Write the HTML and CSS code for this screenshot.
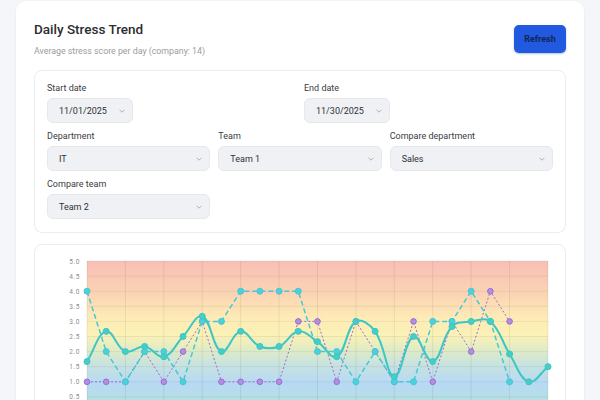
FILE: index.html
```html
<!DOCTYPE html>
<html lang="en">
  <head>
    <meta charset="UTF-8" />
    <meta name="viewport" content="width=device-width, initial-scale=1.0" />
    <title>Daily Stress Trend</title>
    <link rel="stylesheet" href="styles.css">
  </head>
  <body>
    <div class="card">
      <div class="cardHeader">
        <div>
          <h2 class="title">Daily Stress Trend</h2>
          <p class="subtitle">Average stress score per day (company: 14)</p>
        </div>
        <button class="refreshBtn">Refresh</button>
      </div>

      <div class="filters">
        <div class="row two">
          <div class="field">
            <label>Start date</label>
            <div class="select small"><span>11/01/2025</span><svg class="chev" viewBox="0 0 10 6"><path d="M1 1l4 4 4-4" /></svg></div>
          </div>
          <div class="field">
            <label>End date</label>
            <div class="select small"><span>11/30/2025</span><svg class="chev" viewBox="0 0 10 6"><path d="M1 1l4 4 4-4" /></svg></div>
          </div>
        </div>
        <div class="row three">
          <div class="field">
            <label>Department</label>
            <div class="select"><span>IT</span><svg class="chev" viewBox="0 0 10 6"><path d="M1 1l4 4 4-4" /></svg></div>
          </div>
          <div class="field">
            <label>Team</label>
            <div class="select"><span>Team 1</span><svg class="chev" viewBox="0 0 10 6"><path d="M1 1l4 4 4-4" /></svg></div>
          </div>
          <div class="field">
            <label>Compare department</label>
            <div class="select"><span>Sales</span><svg class="chev" viewBox="0 0 10 6"><path d="M1 1l4 4 4-4" /></svg></div>
          </div>
        </div>
        <div class="row three">
          <div class="field">
            <label>Compare team</label>
            <div class="select"><span>Team 2</span><svg class="chev" viewBox="0 0 10 6"><path d="M1 1l4 4 4-4" /></svg></div>
          </div>
        </div>
      </div>

      <div class="chartBox">
        <svg id="chart" width="530" height="200" viewBox="0 0 530 200">
          <defs>
            <linearGradient id="bands" x1="0" y1="0" x2="0" y2="1">
              <stop offset="0" stop-color="#f8bfb6" />
              <stop offset="0.2" stop-color="#fbd3b4" />
              <stop offset="0.36" stop-color="#fdecb6" />
              <stop offset="0.46" stop-color="#fbf1b6" />
              <stop offset="0.54" stop-color="#e3ecc3" />
              <stop offset="0.64" stop-color="#c8e3de" />
              <stop offset="0.76" stop-color="#b7d9f4" />
              <stop offset="0.9" stop-color="#b5e2de" />
              <stop offset="1" stop-color="#b8e8d2" />
            </linearGradient>
          </defs>
        </svg>
      </div>
    </div>

    <script>
      (function () {
        // chart geometry
        const plotLeft = 52, plotRight = 513, plotTop = 16, unit = 30.2;
        const count = 25;
        const step = (plotRight - plotLeft) / (count - 1);
        const NS = 'http://www.w3.org/2000/svg';
        const svg = document.getElementById('chart');

        const team = [1.67, 2.67, 2.0, 2.17, 1.83, 2.5, 3.17, 2.0, 2.67, 2.17, 2.17, 2.67, 2.33, 1.83, 3.0, 2.67, 1.17, 2.5, 1.67, 2.83, 3.0, 3.0, 1.92, 1.0, 1.5];
        const compareDept = [4, 2, 1, 2, 2, 1, 3, 3, 4, 4, 4, 4, 2, 2, 1, 2, 1, 1, 3, 3, 4, 3, 1];
        const compareTeam = [1, 1, 1, 2, 1, 2, 3, 1, 1, 1, 1, 3, 3, 1, 3, 2, 1, 3, 1, 3, 2, 4, 3];

        function yOf(v) {
          return plotTop + (5 - v) * unit;
        }

        function el(name, attrs) {
          let node = document.createElementNS(NS, name);
          for (let k in attrs) node.setAttribute(k, attrs[k]);
          svg.appendChild(node);
          return node;
        }

        // background bands
        el('rect', { x: plotLeft, y: plotTop, width: plotRight - plotLeft, height: 5 * unit + 10, fill: 'url(#bands)' });

        // grid
        for (let i = 0; i <= 10; i++) {
          let y = plotTop + i * unit / 2;
          el('line', { x1: plotLeft, x2: plotRight, y1: y, y2: y, stroke: 'rgba(0,0,0,0.06)', 'stroke-width': 1 });
          let t = el('text', { x: 45, y: y + 2.5, class: 'tick' });
          t.textContent = (5 - i * 0.5).toFixed(1);
        }
        for (let i = 0; i <= 12; i++) {
          let x = plotLeft + i * (plotRight - plotLeft) / 12;
          el('line', { x1: x, x2: x, y1: plotTop, y2: 200, stroke: 'rgba(0,0,0,0.07)', 'stroke-width': 1 });
        }

        function points(data) {
          return data.map((v, i) => [plotLeft + i * step, yOf(v)]);
        }

        function smoothPath(pts, tension) {
          let d = 'M' + pts[0][0] + ' ' + pts[0][1];
          let ctrl = [];
          for (let i = 0; i < pts.length; i++) {
            let p0 = pts[i - 1] || pts[i], p1 = pts[i], p2 = pts[i + 1] || pts[i];
            let d01 = Math.hypot(p1[0] - p0[0], p1[1] - p0[1]);
            let d12 = Math.hypot(p2[0] - p1[0], p2[1] - p1[1]);
            let s01 = d01 / (d01 + d12 || 1), s12 = d12 / (d01 + d12 || 1);
            let fa = tension * s01, fb = tension * s12;
            ctrl.push({
              prev: [p1[0] - fa * (p2[0] - p0[0]), p1[1] - fa * (p2[1] - p0[1])],
              next: [p1[0] + fb * (p2[0] - p0[0]), p1[1] + fb * (p2[1] - p0[1])]
            });
          }
          for (let i = 1; i < pts.length; i++) {
            let a = ctrl[i - 1].next, b = ctrl[i].prev;
            d += ' C' + a[0] + ' ' + a[1] + ' ' + b[0] + ' ' + b[1] + ' ' + pts[i][0] + ' ' + pts[i][1];
          }
          return d;
        }

        function linePath(pts) {
          return pts.map((p, i) => (i ? 'L' : 'M') + p[0] + ' ' + p[1]).join(' ');
        }

        // compare team (dotted purple)
        let ptsC = points(compareTeam);
        el('path', { d: linePath(ptsC), fill: 'none', stroke: '#9a6cd2', 'stroke-width': 1, 'stroke-dasharray': '2 2' });

        // compare department (dashed teal)
        let ptsB = points(compareDept);
        el('path', { d: linePath(ptsB), fill: 'none', stroke: '#45c9d4', 'stroke-width': 1.5, 'stroke-dasharray': '5 3' });

        // team (solid)
        let ptsA = points(team);
        el('path', { d: smoothPath(ptsA, 0.4), fill: 'none', stroke: '#3ec6c4', 'stroke-width': 2 });

        ptsC.forEach(p => el('circle', { cx: p[0], cy: p[1], r: 2.8, fill: '#b48fe0', stroke: '#9a6cd2', 'stroke-width': 1 }));
        ptsB.forEach(p => el('circle', { cx: p[0], cy: p[1], r: 3, fill: '#4fd0d8', stroke: '#45c9d4', 'stroke-width': 1 }));
        ptsA.forEach(p => el('circle', { cx: p[0], cy: p[1], r: 3, fill: '#45cdc8', stroke: '#3ec6c4', 'stroke-width': 1 }));
      })();
    </script>
  </body>
</html>
```

FILE: styles.css
```css
* {
  box-sizing: border-box;
}

body {
  margin: 0;
  background: #f4f6fa;
  font-family: Roboto, "Noto Sans", sans-serif;
  color: #2d2f33;
  overflow: hidden;
}

.card {
  margin: 1px 16px 0 16px;
  background: #fff;
  border-radius: 10px;
  box-shadow: 0 1px 3px rgba(20, 30, 60, 0.06);
  padding: 18px 18px 0 18px;
  height: 420px;
}

.cardHeader {
  display: flex;
  justify-content: space-between;
  align-items: flex-start;
  margin-bottom: 14px;
}

.title {
  margin: 1px 0 0 0;
  font-size: 13.5px;
  font-weight: 500;
  line-height: 18px;
  color: #2b2d31;
}

.subtitle {
  margin: 8px 0 0 0;
  font-size: 8.8px;
  color: #9a9ca1;
}

.refreshBtn {
  margin-top: 6px;
  width: 52px;
  height: 28px;
  border: none;
  border-radius: 5px;
  background: #2159e0;
  color: #13265a;
  font-family: inherit;
  font-size: 9px;
  font-weight: 700;
  box-shadow: 0 1px 2px rgba(20, 50, 140, 0.3);
}

.filters {
  border: 1px solid #ececef;
  border-radius: 8px;
  padding: 11px 12px 13px 12px;
  display: flex;
  flex-direction: column;
  gap: 7px;
}

.row {
  display: grid;
  gap: 8px;
}

.row.two {
  grid-template-columns: 1fr 1fr;
}

.row.three {
  grid-template-columns: 1fr 1fr 1fr;
}

.field label {
  display: block;
  font-size: 9px;
  line-height: 12px;
  color: #3a3c40;
  margin-bottom: 4px;
}

.select {
  display: flex;
  align-items: center;
  justify-content: space-between;
  height: 25px;
  padding: 0 7px 0 11px;
  background: #f0f1f4;
  border: 1px solid #e7e8eb;
  border-radius: 6px;
  font-size: 9px;
  color: #2f3136;
}

.select.small {
  width: 86px;
}

.chev {
  width: 6px;
  height: 4px;
  fill: none;
  stroke: #9a9ca2;
  stroke-width: 1.3;
}

.chartBox {
  margin-top: 11px;
  border: 1px solid #ececef;
  border-radius: 8px;
  height: 200px;
  overflow: hidden;
}

.chartBox svg {
  display: block;
}

.tick {
  font-size: 6.5px;
  fill: #8a8c90;
  text-anchor: end;
  letter-spacing: 0.6px;
}
```
